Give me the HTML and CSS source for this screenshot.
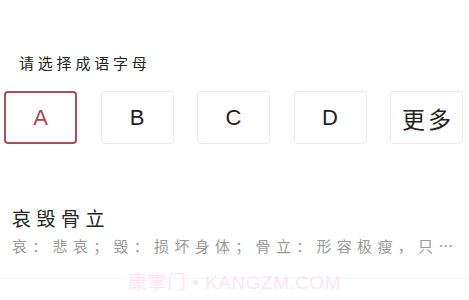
FILE: index.html
```html
<!DOCTYPE html>
<html lang="zh-CN">
<head>
    <meta charset="UTF-8">
    <title>成语字母</title>
    <link rel="stylesheet" href="styles.css">
</head>
<body>
    <div class="page">
        <!-- 字母选择 -->
        <p class="label">请选择成语字母</p>
        <div class="letters">
            <div class="letter active">A</div>
            <div class="letter">B</div>
            <div class="letter">C</div>
            <div class="letter">D</div>
            <div class="letter more">更多</div>
        </div>

        <!-- 成语列表 -->
        <div class="idiom">
            <h2 class="idiom-title">哀毁骨立</h2>
            <p class="idiom-desc">哀：悲哀；毁：损坏身体；骨立：形容极瘦，只…</p>
        </div>

        <div class="watermark">康掌门 • KANGZM.COM</div>
    </div>
</body>
</html>
```

FILE: styles.css
```css
body {
    margin: 0;
    background: #fff;
    font-family: 'Liberation Sans', 'Noto Sans CJK SC', sans-serif;
    color: #222;
}
.page {
    position: relative;
    width: 469px;
    height: 300px;
    overflow: hidden;
}
.label {
    margin: 0;
    padding: 54px 0 0 19px;
    font-size: 15px;
    line-height: 20px;
    letter-spacing: 3.8px;
    color: #222;
}
.letters {
    display: flex;
    justify-content: space-between;
    margin-top: 17px;
    padding: 0 6px 0 4px;
}
.letter {
    box-sizing: border-box;
    width: 73px;
    height: 53px;
    display: flex;
    align-items: center;
    justify-content: center;
    border: 1px solid #f1e6e8;
    border-radius: 4px;
    font-size: 22px;
    color: #222;
}
.letter.active {
    border: 2px solid #a8505a;
    color: #a54a55;
}
.letter.more {
    font-size: 23px;
    letter-spacing: 3px;
    padding-left: 3px;
}
.idiom {
    margin-top: 64px;
    padding: 0 12px 23px;
    border-bottom: 1px solid #f5f5f5;
}
.idiom-title {
    margin: 0;
    font-size: 19px;
    line-height: 24px;
    font-weight: normal;
    letter-spacing: 5.5px;
    color: #222;
}
.idiom-desc {
    margin: 5px 0 0;
    font-family: 'Noto Sans CJK SC', sans-serif;
    font-size: 15px;
    line-height: 18px;
    letter-spacing: 5.3px;
    color: #9a9a9a;
    white-space: nowrap;
}
.watermark {
    position: absolute;
    left: 128px;
    top: 267px;
    font-size: 19px;
    letter-spacing: 0.5px;
    color: #fde6f3;
    white-space: nowrap;
}
```
